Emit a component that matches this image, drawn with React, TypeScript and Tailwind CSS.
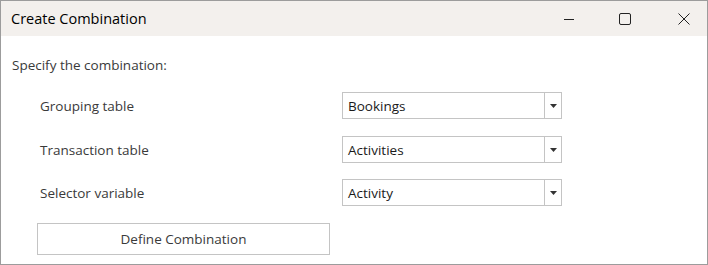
import React from "react";

const font = { fontFamily: '"Open Sans", "Noto Sans", sans-serif' };

function Combo({ value }: { value: string }) {
  return (
    <div className="flex h-[27px] w-[220px] border border-[#c4c4c4] bg-white">
      <div className="flex flex-1 items-center pl-[5px] text-[13.5px] text-[#1a1a1a]">{value}</div>
      <div className="flex w-[17px] items-center justify-center border-l border-[#c4c4c4]">
        <svg width="7" height="4" viewBox="0 0 7 4"><path d="M0 0H7L3.5 4Z" fill="#333" /></svg>
      </div>
    </div>
  );
}

function Row({ label, value }: { label: string; value: string }) {
  return (
    <div className="flex items-center">
      <div className="w-[341px] shrink-0 pl-[39px] text-[13.5px] text-[#3a3a3a]">{label}</div>
      <Combo value={value} />
    </div>
  );
}

export default function App() {
  return (
    <div className="h-[265px] w-[708px] border border-[#9c9c9c] bg-white" style={font}>
      <div className="flex h-[35px] items-center bg-[#f3f0ed]">
        <div className="flex-1 pl-[10px] text-[14.5px] text-black">Create Combination</div>
        <div className="flex h-full items-center">
          <div className="flex h-full w-[46px] items-center justify-center">
            <svg width="12" height="12" viewBox="0 0 12 12"><path d="M1 6.5H11" stroke="#222" strokeWidth="1" /></svg>
          </div>
          <div className="ml-[10px] flex h-full w-[46px] items-center justify-center">
            <svg width="12" height="12" viewBox="0 0 12 12"><rect x="0.5" y="0.5" width="11" height="11" rx="1.5" fill="none" stroke="#222" strokeWidth="1" /></svg>
          </div>
          <div className="ml-[13px] flex h-full w-[46px] items-center justify-center">
            <svg width="12" height="12" viewBox="0 0 12 12"><path d="M0.5 0.5L11.5 11.5M11.5 0.5L0.5 11.5" stroke="#222" strokeWidth="1" /></svg>
          </div>
        </div>
      </div>
      <div className="pt-[19px]">
        <div className="pl-[11px] text-[13.5px] text-[#3a3a3a]">Specify the combination:</div>
        <div className="mt-[17px] flex flex-col">
          <Row label="Grouping table" value="Bookings" />
          <div className="mt-[17px]"><Row label="Transaction table" value="Activities" /></div>
          <div className="mt-[16px]"><Row label="Selector variable" value="Activity" /></div>
        </div>
        <div className="mt-[17px] pl-[36px]">
          <button className="flex h-[32px] w-[293px] items-center justify-center border border-[#c4c4c4] bg-white text-[13.5px] text-[#3a3a3a]">
            Define Combination
          </button>
        </div>
      </div>
    </div>
  );
}
